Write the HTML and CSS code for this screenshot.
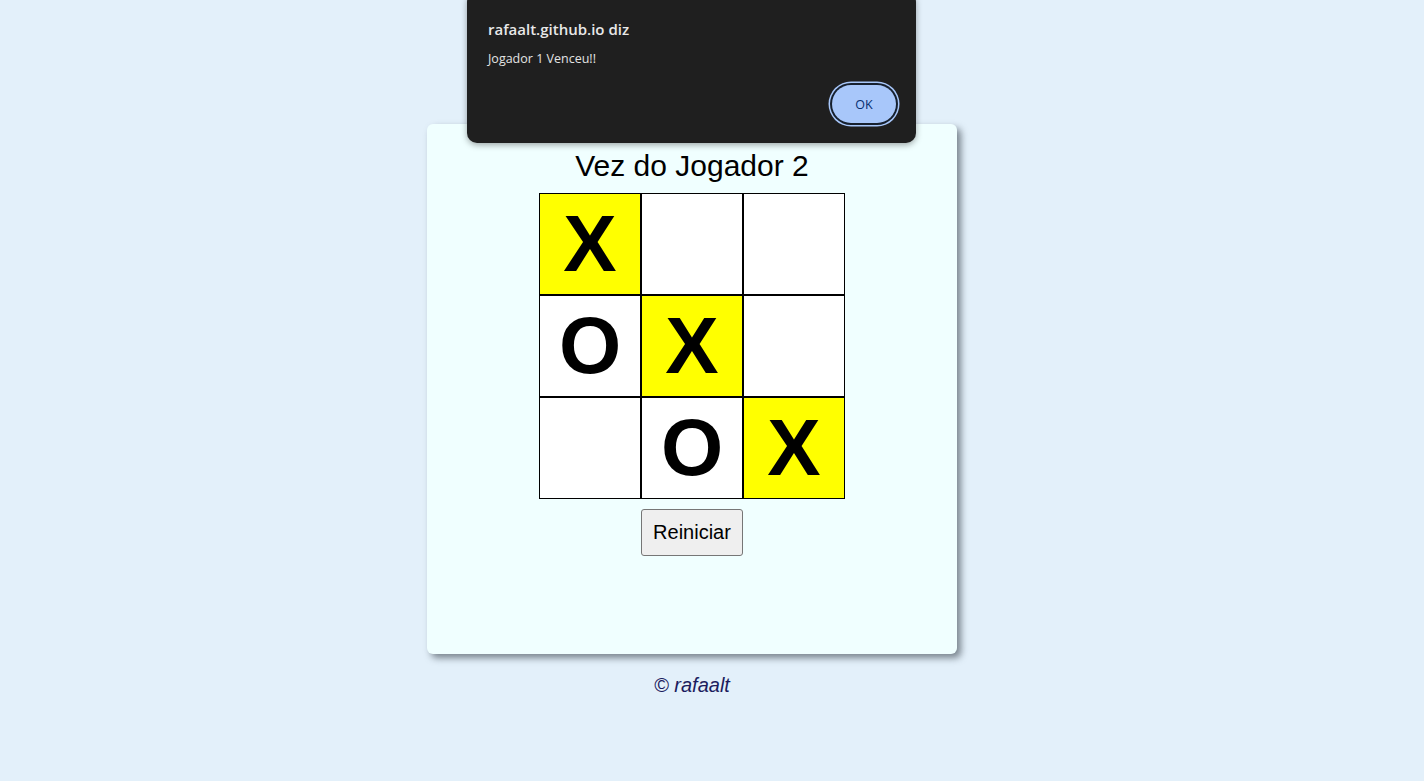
FILE: index.html
```html
<!DOCTYPE html>
<html lang="pt-BR">
<head>
<meta charset="utf-8">
<title>Jogo da Velha</title>
<link rel="stylesheet" href="styles.css">
</head>
<body>
<div class="page">
  <main class="card">
    <h1 class="turn">Vez do Jogador 2</h1>
    <div class="board">
      <div class="cell win">X</div>
      <div class="cell"></div>
      <div class="cell"></div>
      <div class="cell">O</div>
      <div class="cell win">X</div>
      <div class="cell"></div>
      <div class="cell"></div>
      <div class="cell">O</div>
      <div class="cell win">X</div>
    </div>
    <button class="restart">Reiniciar</button>
  </main>
  <footer class="footer">© rafaalt</footer>
</div>
<div class="alert">
  <div class="alert-title">rafaalt.github.io diz</div>
  <div class="alert-msg">Jogador 1 Venceu!!</div>
  <div class="alert-actions"><button class="alert-ok">OK</button></div>
</div>
</body>
</html>
```
FILE: styles.css
```css
html, body {
  margin: 0;
  padding: 0;
}
body {
  background: #e3f0fa;
  font-family: "Liberation Sans", Arial, sans-serif;
  min-height: 781px;
}
.page {
  display: flex;
  flex-direction: column;
  align-items: center;
  padding-top: 124px;
  padding-right: 40px;
}
.card {
  box-sizing: border-box;
  width: 530px;
  height: 530px;
  background: #f0ffff;
  border-radius: 6px;
  box-shadow: 4px 4px 7px rgba(50, 60, 70, 0.6);
  display: flex;
  flex-direction: column;
  align-items: center;
  padding-top: 25px;
}
.turn {
  margin: 0;
  font-size: 30px;
  font-weight: normal;
  line-height: 34px;
  color: #000;
}
.board {
  margin-top: 10px;
  display: grid;
  grid-template-columns: repeat(3, 102px);
  grid-auto-rows: 102px;
}
.cell {
  border: 1px solid #000;
  background: #fff;
  display: flex;
  align-items: center;
  justify-content: center;
  font-size: 80px;
  font-weight: bold;
  line-height: 1;
  color: #000;
}
.cell.win {
  background: #ffff00;
}
.restart {
  margin-top: 10px;
  font-family: "Liberation Sans", Arial, sans-serif;
  font-size: 20px;
  line-height: 23px;
  padding: 11px 11px;
  background: #efefef;
  border: 1px solid #767676;
  border-radius: 3px;
  color: #000;
}
.footer {
  margin-top: 20px;
  font-size: 20px;
  line-height: 23px;
  font-style: italic;
  color: #1c1c5e;
}
.alert {
  position: absolute;
  left: 467px;
  top: -8px;
  width: 449px;
  height: 151px;
  box-sizing: border-box;
  background: #1f1f1f;
  border-radius: 10px;
  box-shadow: 0 2px 6px rgba(0, 0, 0, 0.35);
  padding: 27px 17px 17px 21px;
  display: flex;
  flex-direction: column;
  font-family: "Open Sans", "Noto Sans", sans-serif;
  color: #e6e6e6;
}
.alert-title {
  font-size: 15px;
  font-weight: 600;
  line-height: 20px;
  color: #e8e8e8;
}
.alert-msg {
  margin-top: 11px;
  font-size: 12.5px;
  line-height: 17px;
  color: #e3e3e3;
}
.alert-actions {
  margin-top: auto;
  display: flex;
  justify-content: flex-end;
}
.alert-ok {
  width: 64px;
  height: 38px;
  margin: 0 3px 3px 0;
  border: none;
  border-radius: 19px;
  background: #a8c7fa;
  box-shadow: 0 0 0 2px #16202e, 0 0 0 3.5px #a8c7fa;
  font-family: "Open Sans", "Noto Sans", sans-serif;
  font-size: 12.5px;
  font-weight: 500;
  color: #062e6f;
  padding: 0;
}
```
